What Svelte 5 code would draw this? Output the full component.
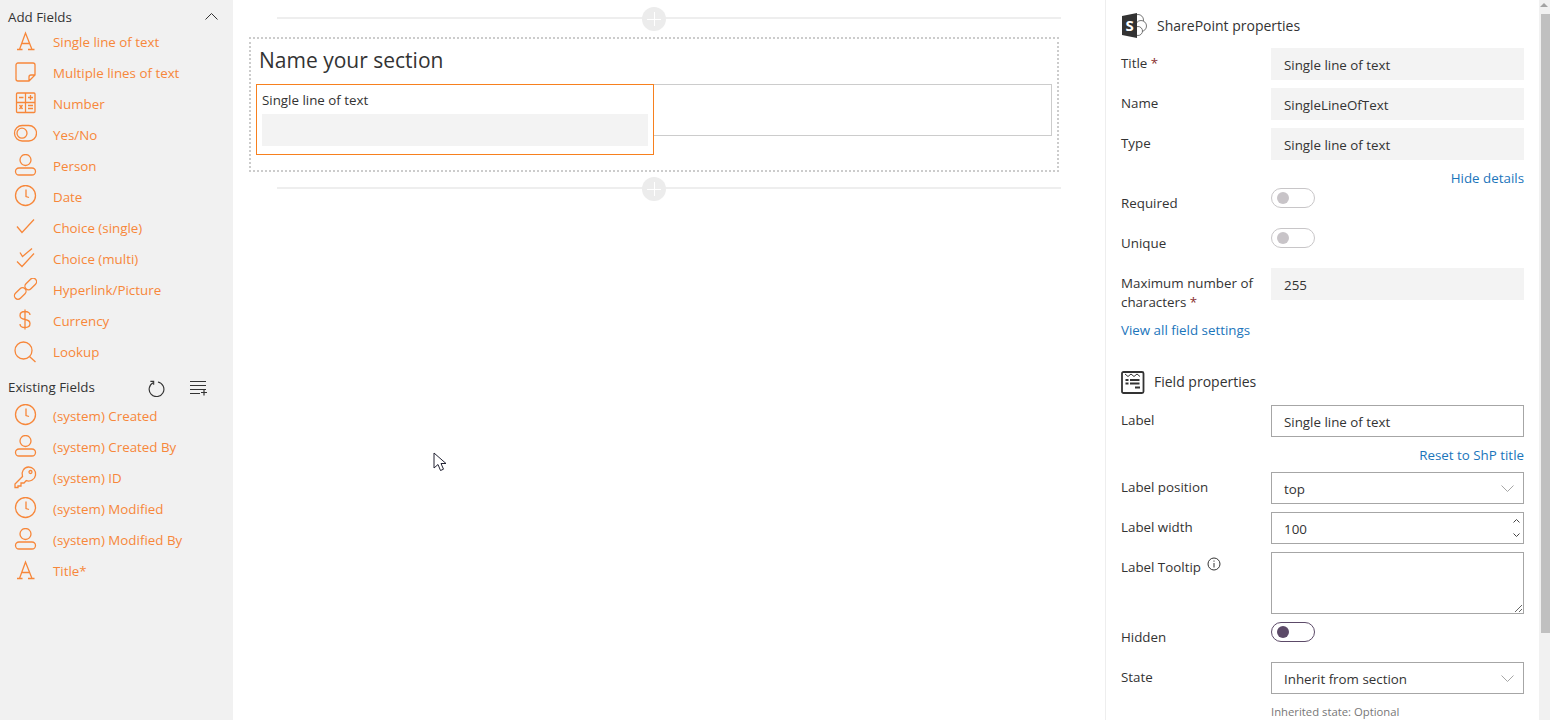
<script>
  const addFields = [
    { icon: "text", name: "Single line of text" },
    { icon: "note", name: "Multiple lines of text" },
    { icon: "calc", name: "Number" },
    { icon: "toggle", name: "Yes/No" },
    { icon: "person", name: "Person" },
    { icon: "clock", name: "Date" },
    { icon: "check", name: "Choice (single)" },
    { icon: "checks", name: "Choice (multi)" },
    { icon: "link", name: "Hyperlink/Picture" },
    { icon: "dollar", name: "Currency" },
    { icon: "search", name: "Lookup" }
  ];
  const existingFields = [
    { icon: "clock", name: "(system) Created" },
    { icon: "person", name: "(system) Created By" },
    { icon: "key", name: "(system) ID" },
    { icon: "clock", name: "(system) Modified" },
    { icon: "person", name: "(system) Modified By" },
    { icon: "text", name: "Title*" }
  ];
</script>

{#snippet fieldIcon(icon)}
  <svg class="field-icon" viewBox="0 0 24 24" width="24" height="24" aria-hidden="true">
    {#if icon === "text"}
      <path d="M4 19.5h5.5M15 19.5h6.5M6.5 19.5 12.5 3l6.5 16.5M8.5 13.5h8" />
    {:else if icon === "note"}
      <path d="M5 2h15a2 2 0 0 1 2 2v10l-6 6H5a2 2 0 0 1-2-2V4a2 2 0 0 1 2-2zM22 14h-4a2 2 0 0 0-2 2v4" />
    {:else if icon === "calc"}
      <rect x="3.5" y="1" width="18.5" height="19.5" rx="1" />
      <path d="M3.5 10.5H22M12.5 1v19.5M6 5.500h4.500M15 5.500h5M17.500 3v5M6.500 13l3 4M9.500 13l-3 4M15 13.500h5M15 16.500h5" />
    {:else if icon === "toggle"}
      <rect x="1.500" y="2.500" width="22" height="15.500" rx="7.700" />
      <circle cx="9" cy="10.200" r="5" />
    {:else if icon === "person"}
      <circle cx="12.500" cy="6" r="5.500" />
      <rect x="2.500" y="14" width="20" height="7" rx="3.500" />
    {:else if icon === "clock"}
      <circle cx="12.500" cy="10.500" r="10" />
      <path d="M13 4.500v7l3 1" />
    {:else if icon === "check"}
      <path d="m4 10.500 5 6 12-13" />
    {:else if icon === "checks"}
      <path d="m4 14.500 5 5 12-13M7 5.500l2.500 4L19 1.500" />
    {:else if icon === "link"}
      <rect x="0.500" y="12" width="13.500" height="7" rx="3.500" transform="rotate(-45 7.250 15.500)" />
      <rect x="11" y="2.500" width="13.500" height="7" rx="3.500" transform="rotate(-45 17.750 6)" />
    {:else if icon === "dollar"}
      <path d="M17 6c0-2-2-3.500-5-3.500S7 4 7 6.500 9 10 12 10.500s5 1.500 5 4-2 4-5 4-5-1.500-5-3.500M12 .5v20" />
    {:else if icon === "search"}
      <circle cx="10.500" cy="10.500" r="8.500" />
      <path d="m16.500 16.500 6 5.500" />
    {:else if icon === "key"}
      <path d="M15.500 1a7 7 0 1 1-2.200 13.600L11 17H8v3H5v1.500H2v-3.500l7.500-7.500A7 7 0 0 1 15.500 1z" />
      <circle cx="17.500" cy="6" r="1.500" />
    {/if}
  </svg>
{/snippet}

{#snippet fieldList(items)}
  <ul class="field-list">
    {#each items as item}
      <li>
        {@render fieldIcon(item.icon)}
        <span>{item.name}</span>
      </li>
    {/each}
  </ul>
{/snippet}

{#snippet chevron()}
  <svg class="chevron" viewBox="0 0 13 7" width="13" height="7" aria-hidden="true">
    <path d="m.5.5 6 6 6-6" />
  </svg>
{/snippet}

{#snippet addRow()}
  <div class="add-row">
    <span class="add-btn"></span>
  </div>
{/snippet}

<div class="page">
  <aside class="sidebar">
    <div class="side-head first-head">
      <span class="side-title">Add Fields</span>
      <svg class="collapse" viewBox="0 0 13 7" width="13" height="7" aria-hidden="true">
        <path d="m.5 6.500 6-6 6 6" />
      </svg>
    </div>
    {@render fieldList(addFields)}

    <div class="side-head existing">
      <span class="side-title">Existing Fields</span>
      <svg class="tool" viewBox="0 0 18 18" width="17" height="17" aria-hidden="true">
        <path d="M5.500 2.800a7.800 7.800 0 1 0 5-.7" />
        <path d="M2.500 1.500h3.500v3.500" />
      </svg>
      <svg class="tool list-add" viewBox="0 0 18 18" width="18" height="18" aria-hidden="true">
        <path d="M1 2.500h16M1 6.500h16M1 10.500h16M1 14.500h10M15 10.500v6M12 13.500h6" />
      </svg>
    </div>
    {@render fieldList(existingFields)}
  </aside>

  <main class="canvas">
    {@render addRow()}
    <section class="section">
      <h2>Name your section</h2>
      <div class="columns">
        <div class="field-box">
          <div class="box-label">Single line of text</div>
          <div class="box-input"></div>
        </div>
        <div class="empty-box"></div>
      </div>
    </section>
    {@render addRow()}
    <svg class="cursor" viewBox="0 0 13 21" width="13" height="21" aria-hidden="true">
      <path d="M1 1v15l4-3.500 2.500 6 3-1.300L8 11.500h5z" />
    </svg>
  </main>

  <aside class="props">
    <div class="props-body">
      <h3 class="props-head sp">
        <svg viewBox="0 0 26 25" width="26" height="25" aria-hidden="true">
          <circle cx="16" cy="7" r="5.500" class="ring" />
          <circle cx="19" cy="13" r="5.500" class="ring" />
          <circle cx="16" cy="18" r="4.500" class="ring" />
          <path d="M0 3 15 0v25L0 22z" fill="#333" />
          <text x="3.500" y="17.500" class="logo-s">S</text>
        </svg>
        SharePoint properties
      </h3>

      <div class="row"><span class="lbl">Title <em>*</em></span><div class="ro">Single line of text</div></div>
      <div class="row"><span class="lbl">Name</span><div class="ro">SingleLineOfText</div></div>
      <div class="row short"><span class="lbl">Type</span><div class="ro">Single line of text</div></div>
      <div class="link-right first">Hide details</div>

      <div class="row toggle-row"><span class="lbl">Required</span><div class="toggle"><i></i></div></div>
      <div class="row toggle-row"><span class="lbl">Unique</span><div class="toggle"><i></i></div></div>
      <div class="row tall"><span class="lbl">Maximum number of characters <em>*</em></span><div class="ro">255</div></div>
      <div class="link-left">View all field settings</div>

      <h3 class="props-head fp">
        <svg viewBox="0 0 24 23" width="24" height="23" aria-hidden="true" class="fp-icon">
          <rect x="1" y="1" width="21.500" height="21" rx="1.500" />
          <path d="m4 3 3 2.500L10 3l3 2.500L16 3l3 2.500" class="thin" />
          <path d="M4.500 9h3M9 9h9.500M4.500 12.500h3M9 12.500h9.500M14 16.500h5" />
        </svg>
        Field properties
      </h3>

      <div class="row short"><span class="lbl">Label</span><div class="inp">Single line of text</div></div>
      <div class="link-right second">Reset to ShP title</div>

      <div class="row"><span class="lbl">Label position</span><div class="inp select">top {@render chevron()}</div></div>
      <div class="row">
        <span class="lbl">Label width</span>
        <div class="inp select">
          100
          <span class="spin">
            <svg viewBox="0 0 7 4" width="7" height="4" aria-hidden="true"><path d="m.5 3.500 3-3 3 3" /></svg>
            <svg viewBox="0 0 7 4" width="7" height="4" aria-hidden="true"><path d="m.5.5 3 3 3-3" /></svg>
          </span>
        </div>
      </div>
      <div class="row">
        <span class="lbl">Label Tooltip
          <svg class="info" viewBox="0 0 14 14" width="14" height="14" aria-hidden="true">
            <circle cx="7" cy="7" r="6" />
            <path d="M7 6v4.500M7 3.500v1.200" />
          </svg>
        </span>
        <textarea></textarea>
      </div>
      <div class="row toggle-row"><span class="lbl">Hidden</span><div class="toggle on"><i></i></div></div>
      <div class="row"><span class="lbl">State</span><div class="inp select">Inherit from section {@render chevron()}</div></div>
      <div class="hint">Inherited state: Optional</div>
    </div>

    <div class="scrollbar">
      <span class="arrow"></span>
      <span class="thumb"></span>
    </div>
  </aside>
</div>

<style>
  :global(body) {
    margin: 0;
    background: #fff;
    overflow: hidden;
  }

  .page {
    display: flex;
    height: 720px;
    overflow: hidden;
    font-family: "Open Sans", "Liberation Sans", sans-serif;
    font-size: 13.35px;
    line-height: 20px;
    color: #333;
  }

  /* left field palette */
  .sidebar {
    flex: 0 0 233px;
    box-sizing: border-box;
    background: #f1f1f1;
    padding-top: 7px;
  }

  .side-head {
    display: flex;
    align-items: center;
    height: 20px;
    padding-left: 8px;
  }

  .first-head {
    margin-bottom: -1px;
  }

  .side-title {
    flex: 0 0 140px;
  }

  .collapse {
    margin-left: 57px;
    margin-top: -1px;
    fill: none;
    stroke: #333;
    stroke-width: 1;
  }

  .existing {
    margin-top: 10px;
    margin-bottom: 3px;
  }

  .tool {
    margin: 2px 24px 0 0;
    fill: none;
    stroke: #333;
    stroke-width: 1.200;
  }

  .field-list {
    list-style: none;
    margin: 0;
    padding: 0;
  }

  .field-list li {
    display: flex;
    align-items: center;
    gap: 16px;
    height: 31px;
    padding-left: 13px;
    color: #f7873a;
  }

  .field-icon {
    flex: none;
    fill: none;
    stroke: #f7873a;
    stroke-width: 1.300;
  }

  /* middle form canvas */
  .canvas {
    position: relative;
    flex: 0 0 872px;
    box-sizing: border-box;
    padding: 17px 46px 0 16px;
  }

  .add-row {
    position: relative;
    height: 2px;
    margin: 0 -2px 0 28px;
    background: #eee;
  }

  .add-btn {
    position: absolute;
    left: 365px;
    top: -10px;
    width: 24px;
    height: 24px;
    border-radius: 50%;
    background:
      linear-gradient(#fff, #fff) center / 14px 1px no-repeat,
      linear-gradient(#fff, #fff) center / 1px 14px no-repeat,
      #ececec;
  }

  .section {
    box-sizing: border-box;
    height: 135px;
    margin: 18px 0 15px;
    padding: 6px 5px 0;
    border: 2px dotted #ccc;
  }

  .section h2 {
    margin: 0 0 9px 3px;
    font-size: 21px;
    font-weight: 400;
    line-height: 30px;
  }

  .columns {
    display: flex;
    align-items: flex-start;
  }

  .field-box {
    box-sizing: border-box;
    flex: 0 0 398px;
    height: 71px;
    padding: 5px;
    border: 1px solid #f7801e;
  }

  .box-input {
    height: 32px;
    margin-top: 4px;
    background: #f3f3f3;
  }

  .empty-box {
    box-sizing: border-box;
    flex: 0 0 398px;
    height: 52px;
    border: 1px solid #ccc;
    border-left: 0;
  }

  .cursor {
    position: absolute;
    left: 200px;
    top: 452px;
    fill: #fff;
    stroke: #223;
    stroke-width: 1;
  }

  /* right properties panel */
  .props {
    flex: 1;
    display: flex;
    border-left: 1px solid #eee;
    min-width: 0;
  }

  .props-body {
    flex: 0 0 403px;
    margin: 0 15px 0 15px;
  }

  .props-head {
    display: flex;
    align-items: center;
    margin: 0;
    font-size: 14px;
    font-weight: 400;
  }

  .sp {
    height: 25px;
    gap: 9px;
    margin: 13px 0 10px 1px;
  }

  .ring {
    fill: #fff;
    stroke: #555;
    stroke-width: 0.800;
  }

  .logo-s {
    font-family: "Open Sans", sans-serif;
    font-size: 15px;
    font-weight: 700;
    fill: #fff;
  }

  .fp {
    height: 24px;
    gap: 9px;
    margin: 30px 0 11px;
  }

  .fp-icon {
    fill: none;
    stroke: #333;
    stroke-width: 1.800;
  }

  .fp-icon .thin {
    stroke-width: 1;
  }

  .row {
    display: grid;
    grid-template-columns: 150px 253px;
    margin-bottom: 8px;
  }

  .row.short {
    margin-bottom: 0;
  }

  .lbl {
    padding-top: 5px;
  }

  .tall .lbl {
    padding-top: 6px;
    line-height: 19px;
  }

  .lbl em {
    color: #8a3030;
    font-style: normal;
  }

  .ro, .inp {
    box-sizing: border-box;
    height: 32px;
    line-height: 34px;
  }

  .ro {
    padding-left: 13px;
    background: #f3f3f3;
  }

  .inp {
    position: relative;
    padding-left: 12px;
    border: 1px solid #a6a6a6;
    line-height: 32px;
  }

  .chevron {
    position: absolute;
    right: 9px;
    top: 12px;
    fill: none;
    stroke: #a6a6a6;
    stroke-width: 1;
  }

  .spin {
    position: absolute;
    right: 3px;
    top: 6px;
    display: flex;
    flex-direction: column;
    gap: 10px;
  }

  .spin svg {
    fill: none;
    stroke: #444;
    stroke-width: 1;
  }

  textarea {
    box-sizing: border-box;
    display: block;
    width: 253px;
    height: 62px;
    margin: 0;
    border: 1px solid #a6a6a6;
    border-radius: 0;
    outline: 0;
  }

  .info {
    margin-left: 3px;
    vertical-align: 1px;
    fill: none;
    stroke: #333;
    stroke-width: 1;
  }

  .link-right, .link-left {
    color: #1b75bb;
  }

  .link-right {
    text-align: right;
  }

  .first {
    margin: 8px 0 0;
  }

  .second {
    margin: 8px 0 7px;
  }

  .link-left {
    margin-top: 1px;
  }

  .toggle-row {
    height: 40px;
    margin-bottom: 0;
  }

  .toggle {
    position: relative;
    box-sizing: border-box;
    width: 44px;
    height: 20px;
    border: 1px solid #c8c6c8;
    border-radius: 10px;
  }

  .toggle i {
    position: absolute;
    left: 5px;
    top: 3px;
    width: 12px;
    height: 12px;
    border-radius: 50%;
    background: #c8c4c8;
  }

  .toggle.on {
    border-color: #5c4a68;
  }

  .toggle.on i {
    background: #5c4a68;
  }

  .hint {
    margin: 4px 0 0 150px;
    font-size: 11.3px;
    line-height: 20px;
    color: #777;
  }

  .scrollbar {
    flex: 0 0 11px;
    margin-left: auto;
    background: #f1f1f1;
    display: flex;
    flex-direction: column;
    align-items: flex-end;
  }

  .arrow {
    width: 0;
    height: 0;
    margin: 3px 2px 7px 0;
    border: 4px solid transparent;
    border-top: 0;
    border-bottom: 4px solid #a3a3a3;
  }

  .thumb {
    width: 9px;
    height: 619px;
    background: #c0c0c0;
  }
</style>
